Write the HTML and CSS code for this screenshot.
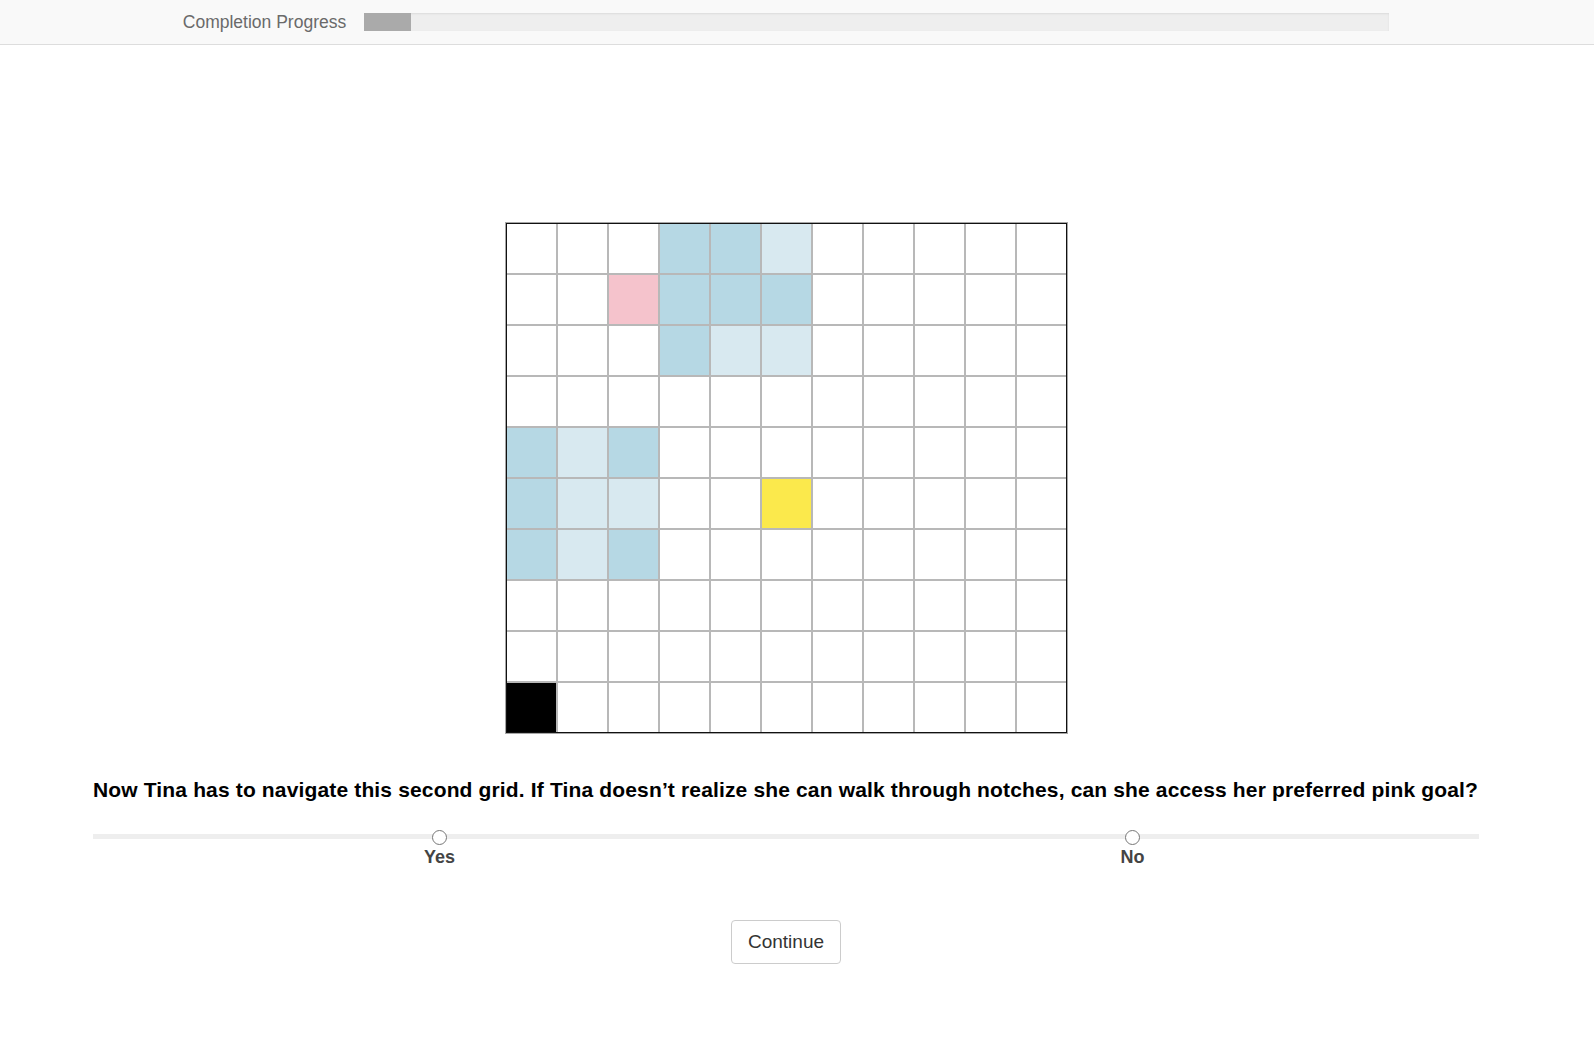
FILE: index.html
```html
<!DOCTYPE html>
<html lang="en">
<head>
<meta charset="utf-8">
<title>Grid question</title>
<link rel="stylesheet" href="styles.css">
</head>
<body>
<header class="topbar">
  <div class="topbar-inner">
    <span class="progress-label">Completion Progress</span>
    <div class="progress"><div class="progress-fill" style="width:47px"></div></div>
  </div>
</header>
<main class="page">
  <div class="grid-wrap">
    <div class="grid">
      <div class="cell"></div><div class="cell"></div><div class="cell"></div><div class="cell blue"></div><div class="cell blue"></div><div class="cell light"></div><div class="cell"></div><div class="cell"></div><div class="cell"></div><div class="cell"></div><div class="cell"></div>
      <div class="cell"></div><div class="cell"></div><div class="cell pink"></div><div class="cell blue"></div><div class="cell blue"></div><div class="cell blue"></div><div class="cell"></div><div class="cell"></div><div class="cell"></div><div class="cell"></div><div class="cell"></div>
      <div class="cell"></div><div class="cell"></div><div class="cell"></div><div class="cell blue"></div><div class="cell light"></div><div class="cell light"></div><div class="cell"></div><div class="cell"></div><div class="cell"></div><div class="cell"></div><div class="cell"></div>
      <div class="cell"></div><div class="cell"></div><div class="cell"></div><div class="cell"></div><div class="cell"></div><div class="cell"></div><div class="cell"></div><div class="cell"></div><div class="cell"></div><div class="cell"></div><div class="cell"></div>
      <div class="cell blue"></div><div class="cell light"></div><div class="cell blue"></div><div class="cell"></div><div class="cell"></div><div class="cell"></div><div class="cell"></div><div class="cell"></div><div class="cell"></div><div class="cell"></div><div class="cell"></div>
      <div class="cell blue"></div><div class="cell light"></div><div class="cell light"></div><div class="cell"></div><div class="cell"></div><div class="cell yellow"></div><div class="cell"></div><div class="cell"></div><div class="cell"></div><div class="cell"></div><div class="cell"></div>
      <div class="cell blue"></div><div class="cell light"></div><div class="cell blue"></div><div class="cell"></div><div class="cell"></div><div class="cell"></div><div class="cell"></div><div class="cell"></div><div class="cell"></div><div class="cell"></div><div class="cell"></div>
      <div class="cell"></div><div class="cell"></div><div class="cell"></div><div class="cell"></div><div class="cell"></div><div class="cell"></div><div class="cell"></div><div class="cell"></div><div class="cell"></div><div class="cell"></div><div class="cell"></div>
      <div class="cell"></div><div class="cell"></div><div class="cell"></div><div class="cell"></div><div class="cell"></div><div class="cell"></div><div class="cell"></div><div class="cell"></div><div class="cell"></div><div class="cell"></div><div class="cell"></div>
      <div class="cell black"></div><div class="cell"></div><div class="cell"></div><div class="cell"></div><div class="cell"></div><div class="cell"></div><div class="cell"></div><div class="cell"></div><div class="cell"></div><div class="cell"></div><div class="cell"></div>
    </div>
  </div>
  <p class="question">Now Tina has to navigate this second grid. If Tina doesn’t realize she can walk through notches, can she access her preferred pink goal?</p>
  <div class="scale">
    <div class="scale-track"></div>
    <label class="option"><span class="radio"></span><span class="option-label">Yes</span></label>
    <label class="option"><span class="radio"></span><span class="option-label">No</span></label>
  </div>
  <div class="actions"><button class="btn" type="button">Continue</button></div>
</main>
</body>
</html>
```

FILE: styles.css
```css
html, body {
  margin: 0;
  padding: 0;
  background: #fff;
  font-family: "Liberation Sans", Arial, sans-serif;
}

.topbar {
  height: 44px;
  background: #f9f9f9;
  border-bottom: 1px solid #ddd;
}

.topbar-inner {
  width: 1572px;
  height: 44px;
  display: flex;
  align-items: center;
  justify-content: center;
  gap: 18px;
}

.progress-label {
  font-size: 17.5px;
  line-height: 20px;
  color: #6a6a6a;
}

.progress {
  width: 1025px;
  height: 18px;
  background: #eee;
  box-shadow: inset 0 1px 2px rgba(0,0,0,0.08);
}

.progress-fill {
  height: 100%;
  background: #aaa;
}

.page {
  width: 1572px;
  display: flex;
  flex-direction: column;
  align-items: center;
}

.grid-wrap {
  margin-top: 178px;
}

.grid {
  display: grid;
  grid-template-columns: repeat(11, 49px);
  grid-auto-rows: 49px;
  gap: 2px;
  background: #b8b8b8;
  border: 1px solid #111;
  box-shadow: 0 0 0 1px rgba(0,0,0,0.35);
}

.cell { background: #fff; }
.cell.blue { background: #b6d8e4; }
.cell.light { background: #d8e9f0; }
.cell.pink { background: #f5c3cc; }
.cell.yellow { background: #fbe94c; }
.cell.black { background: #000; }

.question {
  margin: 45px 0 0;
  width: 1386px;
  font-size: 21px;
  line-height: 24px;
  letter-spacing: 0.15px;
  font-weight: bold;
  color: #000;
  white-space: nowrap;
}

.scale {
  position: relative;
  width: 1386px;
  margin-top: 28px;
  display: grid;
  grid-template-columns: 1fr 1fr;
}

.scale-track {
  position: absolute;
  left: 0;
  right: 0;
  top: 4px;
  height: 5px;
  background: #eee;
}

.option {
  position: relative;
  display: flex;
  flex-direction: column;
  align-items: center;
}

.radio {
  width: 13px;
  height: 13px;
  border: 1px solid #777;
  border-radius: 50%;
  background: #fff;
}

.option-label {
  margin-top: 2px;
  font-size: 18px;
  line-height: 21px;
  font-weight: bold;
  color: #444;
}

.actions {
  margin-top: 52px;
}

.btn {
  width: 110px;
  height: 44px;
  padding: 0;
  background: #fff;
  border: 1px solid #ccc;
  border-radius: 4px;
  font-family: "Liberation Sans", Arial, sans-serif;
  font-size: 19px;
  color: #333;
}
```
